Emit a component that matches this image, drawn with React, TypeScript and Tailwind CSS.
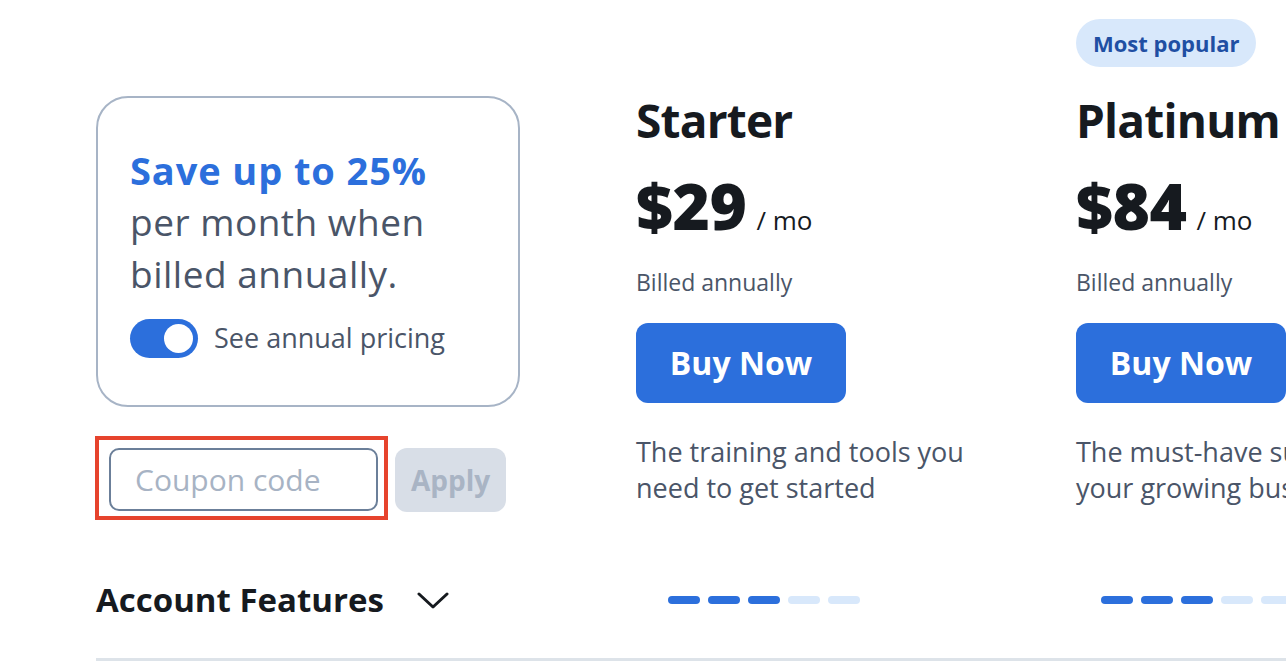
import React, { useState } from "react";

const plans = [
  {
    name: "Starter",
    price: "$29",
    desc: "The training and tools you need to get started",
    badge: false,
    dashOffset: "ml-[32px]",
  },
  {
    name: "Platinum",
    price: "$84",
    desc: "The must-have suite for your growing business",
    badge: true,
    dashOffset: "ml-[25px]",
  },
];

function Dashes({ filled, className }: { filled: number; className: string }) {
  return (
    <div className={`flex gap-[8px] ${className}`}>
      {[0, 1, 2, 3, 4].map((i) => (
        <span
          key={i}
          className={`h-[8px] w-[32px] shrink-0 rounded-full ${i < filled ? "bg-[#2c6fdc]" : "bg-[#d8e8fb]"}`}
        />
      ))}
    </div>
  );
}

export default function App() {
  const [annual, setAnnual] = useState(true);
  const [coupon, setCoupon] = useState("");

  return (
    <div
      className="h-[662px] w-full overflow-hidden bg-white text-[#161a1f]"
      style={{ fontFamily: '"Open Sans", "Noto Sans", Arial, sans-serif' }}
    >
      <div className="grid grid-cols-[540px_440px_440px] pl-[96px] pt-[19px]">
        {/* left column */}
        <div className="pt-[77px]">
          <div className="w-[424px] rounded-[32px] border-2 border-[#a7b4c6] pb-[46px] pl-[32px] pr-[20px] pt-[46px]">
            <p className="text-[37px] leading-[52px] tracking-[0.5px] text-[#4a5568]">
              <span className="block text-[38px] font-bold tracking-[0.9px] text-[#2c6fdc]">Save up to 25%</span>
              per month when
              <br />
              billed annually.
            </p>
            <div className="mt-[18px] flex items-center gap-[16px]">
              <button
                onClick={() => setAnnual(!annual)}
                className={`flex h-[39px] w-[68px] items-center rounded-full px-[5px] ${annual ? "justify-end bg-[#2c6fdc]" : "justify-start bg-[#cbd5e1]"}`}
              >
                <span className="h-[29px] w-[29px] rounded-full bg-white" />
              </button>
              <span className="text-[27px] text-[#4a5568]">See annual pricing</span>
            </div>
          </div>

          <div className="mt-[29px] flex items-start">
            <div className="ml-[-1px] border-4 border-[#e6432d] pb-[5px] pl-[10px] pr-[6px] pt-[8px]">
              <input
                value={coupon}
                onChange={(e) => setCoupon(e.target.value)}
                placeholder="Coupon code"
                className="h-[63px] w-[269px] rounded-[10px] border-2 border-[#6b7f99] px-[24px] text-[30px] text-[#4a5568] outline-none placeholder:text-[#a7b3c4]"
              />
            </div>
            <button className="ml-[7px] mt-[12px] h-[64px] w-[111px] rounded-[12px] bg-[#d8dee7] text-[28px] font-bold text-[#a9b4c4]">
              Apply
            </button>
          </div>
        </div>

        {/* plan columns */}
        {plans.map((p) => (
          <div key={p.name}>
            <div className="h-[48px]">
              {p.badge && (
                <span className="inline-flex h-[48px] items-center rounded-full bg-[#d8e8fb] px-[17px] text-[22px] font-bold text-[#1f4fa3]">
                  Most popular
                </span>
              )}
            </div>
            <h2 className="mt-[26px] whitespace-nowrap text-[46px] font-bold leading-[1.2] tracking-[-0.8px]">{p.name}</h2>
            <div className="mt-[26px] flex items-baseline">
              <span className="text-[64px] font-extrabold leading-none tracking-[-0.5px]">{p.price}</span>
              <span className="ml-[10px] text-[26px]">/ mo</span>
            </div>
            <p className="mt-[26px] text-[23px] leading-[33px] text-[#4a5568]">Billed annually</p>
            <button className="mt-[24px] h-[80px] w-[210px] rounded-[12px] bg-[#2c6fdc] text-[32px] font-bold text-white">
              Buy Now
            </button>
            <p className="mt-[31px] max-w-[340px] text-[27px] leading-[36px] text-[#4a5568]">{p.desc}</p>
          </div>
        ))}
      </div>

      <div className="mt-[59px] grid grid-cols-[540px_440px_440px] items-center pl-[96px]">
        <div className="flex items-center">
          <h3 className="text-[33px] font-bold leading-[1.3]">Account Features</h3>
          <svg className="ml-[33px] mt-[2px]" width="32" height="17" viewBox="0 0 32 17" fill="none">
            <polyline points="2,2 16,15 30,2" stroke="#161a1f" strokeWidth="3" strokeLinecap="round" strokeLinejoin="round" />
          </svg>
        </div>
        {plans.map((p) => (
          <Dashes key={p.name} filled={3} className={`${p.dashOffset} mt-[1px]`} />
        ))}
      </div>

      <div className="ml-[96px] mt-[37px] border-t-[3px] border-[#dde3e9]" />
    </div>
  );
}
